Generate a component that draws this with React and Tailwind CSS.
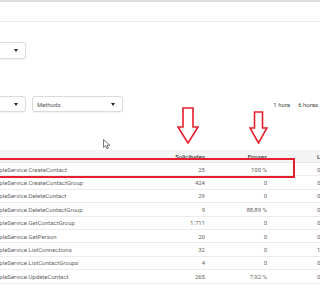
import React from 'react';

const ROWS = [
  ['PeopleService.CreateContact', '25', '100 %', '0,32 s'],
  ['PeopleService.CreateContactGroup', '424', '0', '0,18 s'],
  ['PeopleService.DeleteContact', '29', '0', '0,31 s'],
  ['PeopleService.DeleteContactGroup', '9', '88,89 %', '0,06 s'],
  ['PeopleService.GetContactGroup', '1.711', '0', '0,05 s'],
  ['PeopleService.GetPerson', '20', '0', '0,12 s'],
  ['PeopleService.ListConnections', '32', '0', '1,02 s'],
  ['PeopleService.ListContactGroups', '4', '0', '0,07 s'],
  ['PeopleService.UpdateContact', '265', '7,92 %', '0,94 s'],
];

function Caret() {
  return <span className="block w-0 h-0 border-l-[2.5px] border-r-[2.5px] border-t-[3px] border-l-transparent border-r-transparent border-t-[#222]" />;
}

function Select({ label = '', className = '' }) {
  return (
    <div className={`flex items-center justify-between border border-[#dadada] rounded-[3px] bg-white shadow-[0_1px_1px_rgba(0,0,0,0.06)] pl-[4px] pr-[7px] ${className}`}>
      <span className="text-[6px] text-[#555]">{label}</span>
      <Caret />
    </div>
  );
}

function DownArrow({ className, w, h, shaft, neck }) {
  const cx = w / 2;
  const pts = [
    [cx - shaft / 2, 1], [cx + shaft / 2, 1], [cx + shaft / 2, neck],
    [w - 1, neck], [cx, h - 1], [1, neck], [cx - shaft / 2, neck],
  ].map(p => p.join(',')).join(' ');
  return (
    <svg className={className} width={w} height={h} viewBox={`0 0 ${w} ${h}`}>
      <polygon points={pts} fill="white" stroke="#e5202e" strokeWidth="1.6" strokeLinejoin="miter" />
    </svg>
  );
}

export default function App() {
  return (
    <div className="relative w-[320px] h-[297px] overflow-hidden bg-white font-['Roboto',sans-serif]">
      <div className="h-[2px] bg-[#dedede]" />
      <div className="h-[20px] border-b border-[#ececec]" />

      <div className="h-[20px]" />
      <Select className="-ml-[40px] w-[66px] h-[17px]" />

      <div className="h-[37px]" />
      <div className="flex items-center h-[16px]">
        <Select className="-ml-[40px] w-[66px] h-[16px]" />
        <Select label="Methods" className="ml-[6px] w-[91px] h-[16px]" />
        <div className="ml-auto flex gap-[8px] text-[6px] text-[#444] pr-[2px]">
          <span>1 hora</span>
          <span className="whitespace-nowrap">6 horas</span>
        </div>
      </div>

      <div className="h-[38px]" />

      <div className="text-[6px] text-[#666]">
        <div className="grid grid-cols-[150px_55px_62px_1fr] items-center h-[13px] bg-[#f4f4f4] border-b border-[#e6e6e6] text-[#333] font-medium">
          <span />
          <span className="text-right">Solicitudes</span>
          <span className="text-right">Errores</span>
          <span className="pl-[50px] whitespace-nowrap">Latencia</span>
        </div>
        {ROWS.map(r => (
          <div key={r[0]} className="grid grid-cols-[150px_55px_62px_1fr] items-center h-[13.4px] border-b border-[#ececec]">
            <span className="-ml-[11px] whitespace-nowrap">{r[0]}</span>
            <span className="text-right">{r[1]}</span>
            <span className="text-right">{r[2]}</span>
            <span className="pl-[50px] whitespace-nowrap">{r[3]}</span>
          </div>
        ))}
      </div>

      {/* annotations */}
      <div className="absolute left-[-4px] top-[158px] w-[299px] h-[20px] border-2 border-[#e5202e]" />
      <DownArrow className="absolute left-[177px] top-[107px]" w={22} h={37} shaft={10} neck={20} />
      <DownArrow className="absolute left-[249px] top-[111px]" w={19} h={33} shaft={8} neck={17} />

      <svg className="absolute left-[103px] top-[139px]" width="8" height="11" viewBox="0 0 8 11">
        <path d="M0.5 0.5 L0.5 8.5 L2.6 6.6 L4 9.8 L5.3 9.2 L4 6.2 L6.8 6.2 Z" fill="white" stroke="#555" strokeWidth="0.8" strokeLinejoin="round" />
      </svg>
    </div>
  );
}
